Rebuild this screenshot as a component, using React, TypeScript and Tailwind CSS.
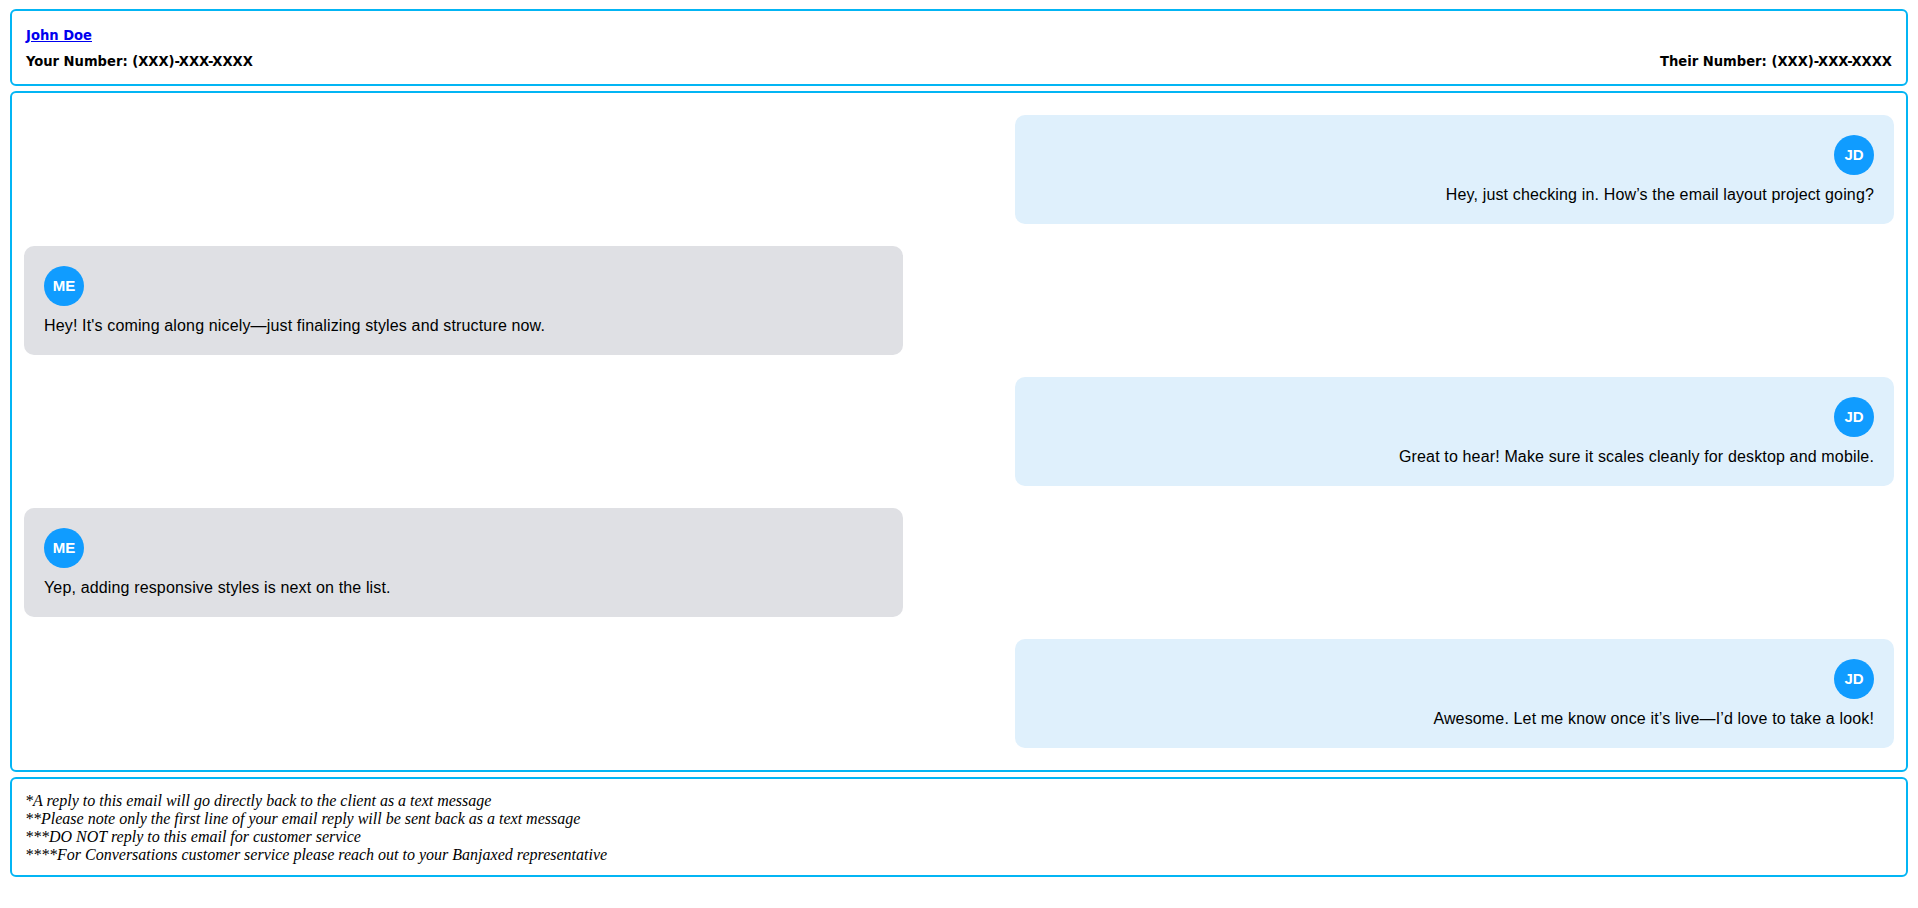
const messages = [
  { from: "them", text: "Hey, just checking in. How\u2019s the email layout project going?" },
  { from: "me", text: "Hey! It's coming along nicely\u2014just finalizing styles and structure now." },
  { from: "them", text: "Great to hear! Make sure it scales cleanly for desktop and mobile." },
  { from: "me", text: "Yep, adding responsive styles is next on the list." },
  { from: "them", text: "Awesome. Let me know once it\u2019s live\u2014I\u2019d love to take a look!" },
];

const notes = [
  "*A reply to this email will go directly back to the client as a text message",
  "**Please note only the first line of your email reply will be sent back as a text message",
  "***DO NOT reply to this email for customer service",
  "****For Conversations customer service please reach out to your Banjaxed representative",
];

const Bubble = ({ from, text }: { from: string; text: string }) => {
  const mine = from === "me";
  return (
    <div className={`flex ${mine ? "justify-start" : "justify-end"}`}>
      <div
        className={`w-[47%] rounded-[10px] px-[20px] pt-[20px] pb-[20px] ${
          mine ? "bg-[#dfe0e4] text-left" : "bg-[#dff0fc] text-right"
        }`}
      >
        <div className={`flex ${mine ? "justify-start" : "justify-end"}`}>
          <div className="w-[40px] h-[40px] rounded-full bg-[#109cff] flex items-center justify-center text-white font-bold text-[15px]">
            {mine ? "ME" : "JD"}
          </div>
        </div>
        <p className="mt-[10px] text-[16px] leading-[19px] tracking-[0.15px] text-black">{text}</p>
      </div>
    </div>
  );
};

export default function App() {
  return (
    <div
      className="min-h-screen bg-white pt-[9px] px-[10px] pb-[10px] flex flex-col gap-[5px]"
      style={{ fontFamily: "'Liberation Sans', Arial, sans-serif" }}
    >
      {/* Header */}
      <div
        className="border-2 border-[#03b5f4] rounded-[6px] px-[14px] pt-[16px] pb-[15px] text-[14.6px] leading-[16px] font-bold text-black"
        style={{ fontFamily: "'DejaVu Sans Condensed', 'DejaVu Sans', Verdana, sans-serif" }}
      >
        <a href="#" className="text-[#0000ee] underline">
          John Doe
        </a>
        <div className="flex justify-between mt-[10px]">
          <span>Your Number: (XXX)-XXX-XXXX</span>
          <span>Their Number: (XXX)-XXX-XXXX</span>
        </div>
      </div>

      {/* Conversation */}
      <div className="border-2 border-[#03b5f4] rounded-[6px] px-[12px] py-[22px] flex flex-col gap-[22px]">
        {messages.map((m, i) => (
          <Bubble key={i} from={m.from} text={m.text} />
        ))}
      </div>

      {/* Footer notes */}
      <div
        className="border-2 border-[#03b5f4] rounded-[6px] px-[13px] pt-[13px] pb-[11px] italic text-[16px] leading-[18px] text-black"
        style={{ fontFamily: "'Liberation Serif', 'Times New Roman', serif" }}
      >
        {notes.map((n, i) => (
          <div key={i}>{n}</div>
        ))}
      </div>
    </div>
  );
}
